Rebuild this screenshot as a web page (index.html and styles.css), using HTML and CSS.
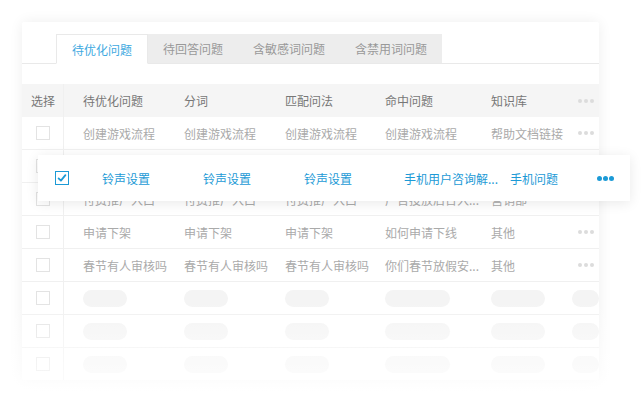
FILE: index.html
```html
<!DOCTYPE html>
<html lang="zh">
<head>
<meta charset="utf-8">
<link rel="stylesheet" href="styles.css">
</head>
<body>
<div class="stage">
  <div class="card">
    <div class="tabs">
      <div class="tab active">待优化问题</div>
      <div class="tab">待回答问题</div>
      <div class="tab">含敏感词问题</div>
      <div class="tab">含禁用词问题</div>
    </div>
    <div class="table">
      <div class="row head">
        <div class="cell sel">选择</div>
        <div class="cell">待优化问题</div>
        <div class="cell">分词</div>
        <div class="cell">匹配问法</div>
        <div class="cell">命中问题</div>
        <div class="cell">知识库</div>
        <div class="cell"><span class="dots"><i></i><i></i><i></i></span></div>
      </div>
      <div class="row">
        <div class="cell sel"><span class="box"></span></div>
        <div class="cell">创建游戏流程</div>
        <div class="cell">创建游戏流程</div>
        <div class="cell">创建游戏流程</div>
        <div class="cell">创建游戏流程</div>
        <div class="cell">帮助文档链接</div>
        <div class="cell"><span class="dots"><i></i><i></i><i></i></span></div>
      </div>
      <div class="row">
        <div class="cell sel"><span class="box"></span></div>
        <div class="cell">铃声设置</div>
        <div class="cell">铃声设置</div>
        <div class="cell">铃声设置</div>
        <div class="cell">手机用户咨询解...</div>
        <div class="cell">手机问题</div>
        <div class="cell"><span class="dots"><i></i><i></i><i></i></span></div>
      </div>
      <div class="row">
        <div class="cell sel"><span class="box"></span></div>
        <div class="cell">付费推广入口</div>
        <div class="cell">付费推广入口</div>
        <div class="cell">付费推广入口</div>
        <div class="cell">广告投放后台入...</div>
        <div class="cell">营销部</div>
        <div class="cell"><span class="dots"><i></i><i></i><i></i></span></div>
      </div>
      <div class="row">
        <div class="cell sel"><span class="box"></span></div>
        <div class="cell">申请下架</div>
        <div class="cell">申请下架</div>
        <div class="cell">申请下架</div>
        <div class="cell">如何申请下线</div>
        <div class="cell">其他</div>
        <div class="cell"><span class="dots"><i></i><i></i><i></i></span></div>
      </div>
      <div class="row">
        <div class="cell sel"><span class="box"></span></div>
        <div class="cell">春节有人审核吗</div>
        <div class="cell">春节有人审核吗</div>
        <div class="cell">春节有人审核吗</div>
        <div class="cell">你们春节放假安...</div>
        <div class="cell">其他</div>
        <div class="cell"><span class="dots"><i></i><i></i><i></i></span></div>
      </div>
      <div class="row ph">
        <div class="cell sel"><span class="box"></span></div>
        <div class="cell"><span class="pill w44"></span></div>
        <div class="cell"><span class="pill w44"></span></div>
        <div class="cell"><span class="pill w44"></span></div>
        <div class="cell"><span class="pill w65"></span></div>
        <div class="cell"><span class="pill w54"></span></div>
        <div class="cell last"><span class="pill w44"></span></div>
      </div>
      <div class="row ph">
        <div class="cell sel"><span class="box"></span></div>
        <div class="cell"><span class="pill w44"></span></div>
        <div class="cell"><span class="pill w44"></span></div>
        <div class="cell"><span class="pill w44"></span></div>
        <div class="cell"><span class="pill w65"></span></div>
        <div class="cell"><span class="pill w54"></span></div>
        <div class="cell last"><span class="pill w44"></span></div>
      </div>
      <div class="row ph">
        <div class="cell sel"><span class="box"></span></div>
        <div class="cell"><span class="pill w44"></span></div>
        <div class="cell"><span class="pill w44"></span></div>
        <div class="cell"><span class="pill w44"></span></div>
        <div class="cell"><span class="pill w65"></span></div>
        <div class="cell"><span class="pill w54"></span></div>
        <div class="cell last"><span class="pill w44"></span></div>
      </div>
    </div>
  </div>

  <div class="float-row">
    <div class="fcell fsel">
      <span class="fbox">
        <svg width="10" height="10" viewBox="0 0 10 10"><path d="M1.6 5.4 L3.9 7.6 L8.4 2.2" fill="none" stroke="#1c9ad6" stroke-width="1.8" stroke-linecap="round" stroke-linejoin="round"/></svg>
      </span>
    </div>
    <div class="fcell">铃声设置</div>
    <div class="fcell">铃声设置</div>
    <div class="fcell">铃声设置</div>
    <div class="fcell">手机用户咨询解...</div>
    <div class="fcell">手机问题</div>
    <div class="fcell"><span class="dots blue"><i></i><i></i><i></i></span></div>
  </div>
  <div class="fade"></div>
</div>
</body>
</html>
```

FILE: styles.css
```css
* { box-sizing: border-box; margin: 0; padding: 0; }
html, body { background: #fff; }
body {
  width: 642px;
  height: 399px;
  overflow: hidden;
  font-family: "Noto Sans CJK SC", "Noto Sans", sans-serif;
  font-size: 12px;
}
.stage {
  position: relative;
  width: 642px;
  height: 399px;
  padding: 22px 0 0 22px;
}
.card {
  width: 577px;
  height: 358px;
  background: #fff;
  overflow: hidden;
  box-shadow: 0 0 14px rgba(0, 0, 0, 0.07);
  border-radius: 2px;
}
.tabs {
  display: flex;
  align-items: flex-end;
  height: 42px;
  padding-left: 34px;
  border-bottom: 1px solid #e9e9e9;
}
.tab {
  height: 30px;
  margin-bottom: -1px;
  padding: 0 15px;
  display: flex;
  align-items: center;
  background: #ededed;
  color: #999;
  white-space: nowrap;
  border-bottom: 1px solid #e9e9e9;
}
.tab.active {
  background: #fff;
  color: #3ea9df;
  border: 1px solid #e9e9e9;
  border-bottom-color: #fff;
  padding: 0 15px;
}
.table { margin-top: 20px; }
.row {
  display: grid;
  grid-template-columns: 42px 101px 101px 100px 106px 87px 1fr;
  height: 33px;
  border-bottom: 1px solid #f0f0f0;
  color: #aaa;
}
.row.head {
  background: #f5f5f5;
  color: #777;
  border-bottom: none;
}
.cell {
  display: flex;
  align-items: center;
  padding-left: 19px;
  white-space: nowrap;
  min-width: 0;
}
.cell.sel {
  padding-left: 0;
  justify-content: center;
  border-right: 1px solid #f0f0f0;
}
.row.head .cell.sel { padding-left: 1px; }
.cell.last { padding-left: 13px; }
.box {
  width: 14px;
  height: 14px;
  border: 1px solid #e3e3e3;
  background: #fff;
}
.dots { display: flex; gap: 2px; }
.dots i {
  display: block;
  width: 4px;
  height: 4px;
  border-radius: 50%;
  background: #dcdcdc;
}
.dots.blue { gap: 1px; }
.dots.blue i { width: 5px; height: 5px; background: #1c9ad6; }
.pill {
  display: block;
  height: 17px;
  border-radius: 9px;
  background: #f4f4f4;
}
.w44 { width: 44px; }
.w54 { width: 54px; }
.w65 { width: 65px; }
.float-row {
  position: absolute;
  left: 38px;
  top: 155px;
  width: 592px;
  height: 46px;
  background: #fff;
  box-shadow: 0 2px 12px rgba(0, 0, 0, 0.09);
  display: grid;
  grid-template-columns: 45px 101px 101px 100px 106px 87px 1fr;
  color: #1c9ad6;
}
.fcell {
  display: flex;
  align-items: center;
  padding-left: 19px;
  white-space: nowrap;
  min-width: 0;
}
.fcell.fsel { padding-left: 17px; }
.fbox {
  width: 14px;
  height: 14px;
  border: 1px solid #1c9ad6;
  display: flex;
  align-items: center;
  justify-content: center;
}
.fade {
  position: absolute;
  left: 0;
  right: 0;
  top: 300px;
  bottom: 0;
  background: linear-gradient(to bottom, rgba(255,255,255,0) 0%, rgba(255,255,255,0.55) 60%, rgba(255,255,255,0.85) 100%);
  pointer-events: none;
}
```
